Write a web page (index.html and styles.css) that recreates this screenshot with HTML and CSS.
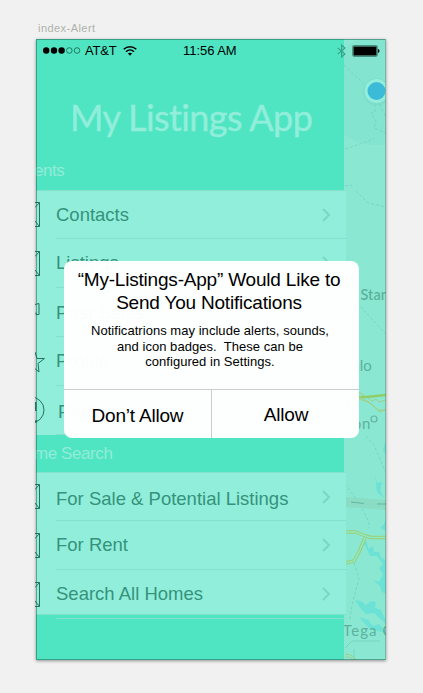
FILE: index.html
```html
<!DOCTYPE html>
<html lang="en">
<head>
<meta charset="utf-8">
<title>index-Alert</title>
<link rel="stylesheet" href="styles.css">
</head>
<body>
<svg width="0" height="0" class="defs">
  <symbol id="box" viewBox="0 0 5 25"><path d="M0 .5H4.5V24.5H0M4.5 .5L0 5.5M4.5 24.5L0 19" /></symbol>
  <symbol id="chev" viewBox="0 0 9 14"><path d="M1 1L7 7L1 13" /></symbol>
</svg>
<div class="label">index-Alert</div>
<main class="phone">
  <section class="menu">
    <h1>My Listings App</h1>
    <h2 class="head agents"><span>ents</span></h2>
    <ul class="list first">
      <li><svg class="icon"><use href="#box"/></svg><a><span>Contacts</span><svg class="chev"><use href="#chev"/></svg></a></li>
      <li><svg class="icon"><use href="#box"/></svg><a><span>Listings</span><svg class="chev"><use href="#chev"/></svg></a></li>
      <li><svg class="icon" viewBox="0 0 5 25"><path d="M0 4.500L4 3.500V14.500H1V12.500"/></svg><a><span class="sales">Past Sales</span><svg class="chev"><use href="#chev"/></svg></a></li>
      <li><svg class="icon" viewBox="0 0 5 25"><path d="M0 3L2 9.500H9.500L3 14.500L4 23L-2 18"/></svg><a><span>Profile</span><svg class="chev"><use href="#chev"/></svg></a></li>
      <li><svg class="icon" viewBox="0 0 5 25"><circle cx="-4" cy="12" r="13"/><path d="M.5 4V13" stroke-width="2"/><path d="M-1 24L2 23" stroke-width="2"/></svg><a><span class="last">Profile</span><svg class="chev"><use href="#chev"/></svg></a></li>
    </ul>
    <h2 class="head search"><span>me Search</span></h2>
    <ul class="list second">
      <li><svg class="icon"><use href="#box"/></svg><a><span class="sale">For Sale &amp; Potential Listings</span><svg class="chev"><use href="#chev"/></svg></a></li>
      <li><svg class="icon"><use href="#box"/></svg><a><span>For Rent</span><svg class="chev"><use href="#chev"/></svg></a></li>
      <li><svg class="icon"><use href="#box"/></svg><a><span>Search All Homes</span><svg class="chev"><use href="#chev"/></svg></a></li>
    </ul>
  </section>
  <svg class="map" viewBox="344 39 42 621">
    <rect x="344" y="39" width="42" height="621" fill="#8ae8d2"/>
    <circle cx="376" cy="91" r="54" fill="#83e4cf"/>
    <path class="road" d="M344 65L366 86M345 149L369 141L374 138M375 104V112L371 113L376 121L374 128L386 133M380 104L382 110L386 117M345 186L351 185L353 188M356 191L368 203L386 207M357 303L368 315L386 334M366 436L374 445L386 473M345 484L359 503L369 522V528M354 563L359 578L352 605L350 620"/>
    <path class="edge" d="M345 648L352 641H380M354 649V660"/>
    <path d="M345 497L386 500V510L345 507Z" fill="#8bdcc4"/>
    <path d="M351 502L364 503.500M377 504H386" stroke="#65b7a0" fill="none"/>
    <g fill="#6be2d5">
      <path d="M375 475L377 483L382 482L380 490L384 498L377 492Z"/>
      <path d="M386 440L383 449L386 456Z"/>
      <path d="M386 518L384 524L380 528L386 531Z"/>
      <path d="M361 541L367 542L368 549L373 546L374 552L379 552L381 558L386 560V594L382 592L380 586L373 580L379 582L383 574L379 568L383 564L377 556L370 556L366 547Z"/>
      <path d="M355 600L361 601L366 605L371 601L376 602L375 608L381 610L386 620V624L374 613L366 614L361 609Z"/>
      <path d="M359 617L368 620L373 626L379 624L386 631V633L370 629Z"/>
    </g>
    <path d="M345 532H355L366 536L371 537.500H386M345 563L354 561L359 552L365 538" stroke="#9dcb78" stroke-width="3.400" fill="none"/>
    <path d="M345 532H355L366 536L371 537.500H386M345 563L354 561L359 552L365 538" stroke="#8eebbd" stroke-width="1.600" fill="none"/>
    <path d="M345 397L366 397L386 395" stroke="#91ce67" stroke-width="2.600" fill="none"/>
    <path d="M357 391L365 396M359 399L368 402L378 410H386M360 397L370 403L380 412L386 409M368 398L372 401L376 399L379 402L386 400M345 654L351 655L356 660M345 657H350L353 660" stroke="#a3cc7b" fill="none" stroke-width=".9"/>
    <g class="place">
      <text x="360.500" y="300" font-weight="600" font-size="14.500">Stan</text>
      <text x="344" y="371">anlo</text>
      <text x="345" y="410" font-weight="700">fa</text>
      <text x="346.500" y="429" letter-spacing=".8">ton</text>
      <circle cx="374" cy="419" r="3" fill="none" stroke="#64b39f" stroke-width="1.200"/>
      <text x="343" y="635.500" letter-spacing="1.1">Tega Cay</text>
    </g>
    <circle cx="376.500" cy="92" r="13.500" fill="#79dac6" opacity=".7"/>
    <circle cx="376.500" cy="91" r="12" fill="#94eedc"/>
    <circle cx="376.500" cy="91" r="9" fill="#3bbbd8"/>
  </svg>
  <header class="status">
    <svg class="signal" viewBox="0 0 38 9"><circle cx="3.200" cy="4.500" r="3.200"/><circle cx="11" cy="4.500" r="3.200"/><circle cx="18.600" cy="4.500" r="3.200"/><g fill="none" stroke="#14624f" stroke-width=".8"><circle cx="26.300" cy="4.500" r="2.800"/><circle cx="34" cy="4.500" r="2.800"/></g></svg>
    <span class="carrier">AT&amp;T</span>
    <svg class="wifi" viewBox="0 0 14 10"><path d="M.7 3.300C4.300-.1 9.700-.1 13.300 3.300M3 5.700C5.300 3.500 8.700 3.500 11 5.700" fill="none" stroke="#000" stroke-width="1.500"/><path d="M4.900 7.500Q7 5.900 9.100 7.500L7 9.800Z"/></svg>
    <span class="time">11:56 AM</span>
    <svg class="bt" viewBox="0 0 9 14"><path d="M.7 3.800L8 10L4.600 13V1L8 4L.7 10.200" fill="none" stroke="#38a189" stroke-width="1.100"/></svg>
    <svg class="battery" viewBox="0 0 28 12"><rect x=".7" y=".7" width="24.600" height="10.600" rx="1.500" fill="none" stroke="#45917f" stroke-width="1.200"/><rect x="1.500" y="1.500" width="23" height="9"/><path d="M26 4Q27.500 4.500 27.500 6T26 8Z"/></svg>
  </header>
  <div class="alert">
    <div class="message">
      <h3><span>“My-Listings-App” Would Like to</span><span>Send You Notifications</span></h3>
      <p><span>Notificatrions may include alerts, sounds,</span><span>and icon badges.&nbsp; These can be</span><span>configured in Settings.</span></p>
    </div>
    <div class="actions"><button class="deny">Don’t Allow</button><button class="allow">Allow</button></div>
  </div>
</main>
</body>
</html>
```
FILE: styles.css
```css
* { box-sizing: border-box; }
body {
  margin: 0;
  height: 693px;
  overflow: hidden;
  background: #f1f1f1;
  font-family: "Liberation Sans", Arial, sans-serif;
}
h1, h2, h3, p, ul { margin: 0; padding: 0; font-weight: 400; }
span { white-space: nowrap; }
.defs { position: absolute; }
.label {
  height: 39px;
  padding: 22px 0 0 38px;
  font-size: 11px;
  line-height: 13px;
  letter-spacing: .45px;
  color: #aeb1a9;
}
.phone {
  position: relative;
  display: grid;
  grid-template-columns: 308px 42px;
  width: 350px;
  height: 621px;
  margin-left: 36px;
  background: #50e5c2;
  box-shadow: 0 1px 3px rgba(0, 0, 0, .4);
}
.phone::after {
  content: "";
  position: absolute;
  z-index: 2;
  inset: 0;
  border: 1px solid rgba(20, 90, 75, .48);
  border-right-color: rgba(80, 110, 100, .38);
  pointer-events: none;
}
.menu { position: relative; z-index: 1; }
.map { width: 42px; height: 621px; }
.road, .edge { fill: none; stroke: #73cfb9; stroke-width: .8; stroke-dasharray: 3 2; }
.edge { stroke-dasharray: none; }
.place { fill: #5db19c; font: 15px Lato, sans-serif; }
.place circle { fill: none; }
h1 {
  height: 114px;
  padding: 54px 0 0 34px;
  font: 400 36px/48px Lato, sans-serif;
  letter-spacing: -.6px;
  white-space: nowrap;
  color: #91eedb;
  -webkit-text-stroke: .4px #91eedb;
}
.head { height: 37px; margin-left: -2px; padding-top: 8px; font-size: 17px; line-height: 20px; letter-spacing: -.42px; color: #93ecd8; }
.head.search { padding-top: 9px; }
.list { list-style: none; width: 309.500px; background: #91eeda; border-top: 1px solid #85e2cd; }
.first { height: 245px; }
.second { height: 143px; border-bottom: 1px solid #7ce0ca; }
li { height: 49px; display: flex; margin-left: -1px; }
.list li:first-child { height: 48px; }
.icon {
  width: 5px;
  height: 25px;
  margin-top: 12px;
  overflow: visible;
  clip-path: inset(-5px -10px -5px 0);
  fill: none;
  stroke: #267360;
}
li:first-child .icon { margin-top: 11px; }
li a {
  display: flex;
  flex: 1;
  align-items: center;
  justify-content: space-between;
  margin-left: 16px;
  padding-right: 15px;
  border-bottom: 1px solid #83e0cb;
  font-size: 18.500px;
  color: #35937c;
}
.last { padding: 4px 0 0 2px; }
.sales { padding-top: 2px; }
.sale { padding-top: 4px; }
.chev { width: 9px; height: 14px; fill: none; stroke: #79d8c2; stroke-width: 2; }
.status {
  position: absolute;
  z-index: 2;
  left: 7px;
  top: 4px;
  width: 340px;
  height: 15px;
  display: flex;
  align-items: center;
  font-size: 13px;
}
.signal { width: 38px; height: 9px; }
.carrier { width: 34px; margin-left: 4px; letter-spacing: -.2px; }
.wifi { width: 14px; height: 10px; margin-left: 4px; }
.time { width: 56px; margin-left: 46px; letter-spacing: -.05px; }
.bt { width: 9px; height: 14px; margin-left: 98px; }
.battery { width: 28px; height: 12px; margin-left: 6px; }
.alert {
  position: absolute;
  z-index: 3;
  left: 28px;
  top: 222px;
  width: 295px;
  height: 177px;
  border-radius: 8px;
  overflow: hidden;
  display: flex;
  flex-direction: column;
  background: rgba(255, 255, 255, .982);
  color: #000;
}
.message { height: 128px; padding-top: 7px; }
h3 { padding-right: 5px; font-size: 19px; line-height: 23px; letter-spacing: -.2px; text-align: center; }
h3 span, p span { display: block; }
p { margin-top: 9px; padding-right: 3px; font-size: 13px; line-height: 15.500px; letter-spacing: .04px; text-align: center; }
.actions { display: grid; grid-template-columns: 148px 1fr; height: 49px; border-top: 1px solid #c8cecd; }
button { border: 0; padding: 0; background: none; font: 19px "Liberation Sans", Arial, sans-serif; letter-spacing: -.2px; color: #000; }
.deny { border-right: 1px solid #c8cecd; padding-top: 3px; }
.allow { padding: 2px 0 0 1px; }
```
